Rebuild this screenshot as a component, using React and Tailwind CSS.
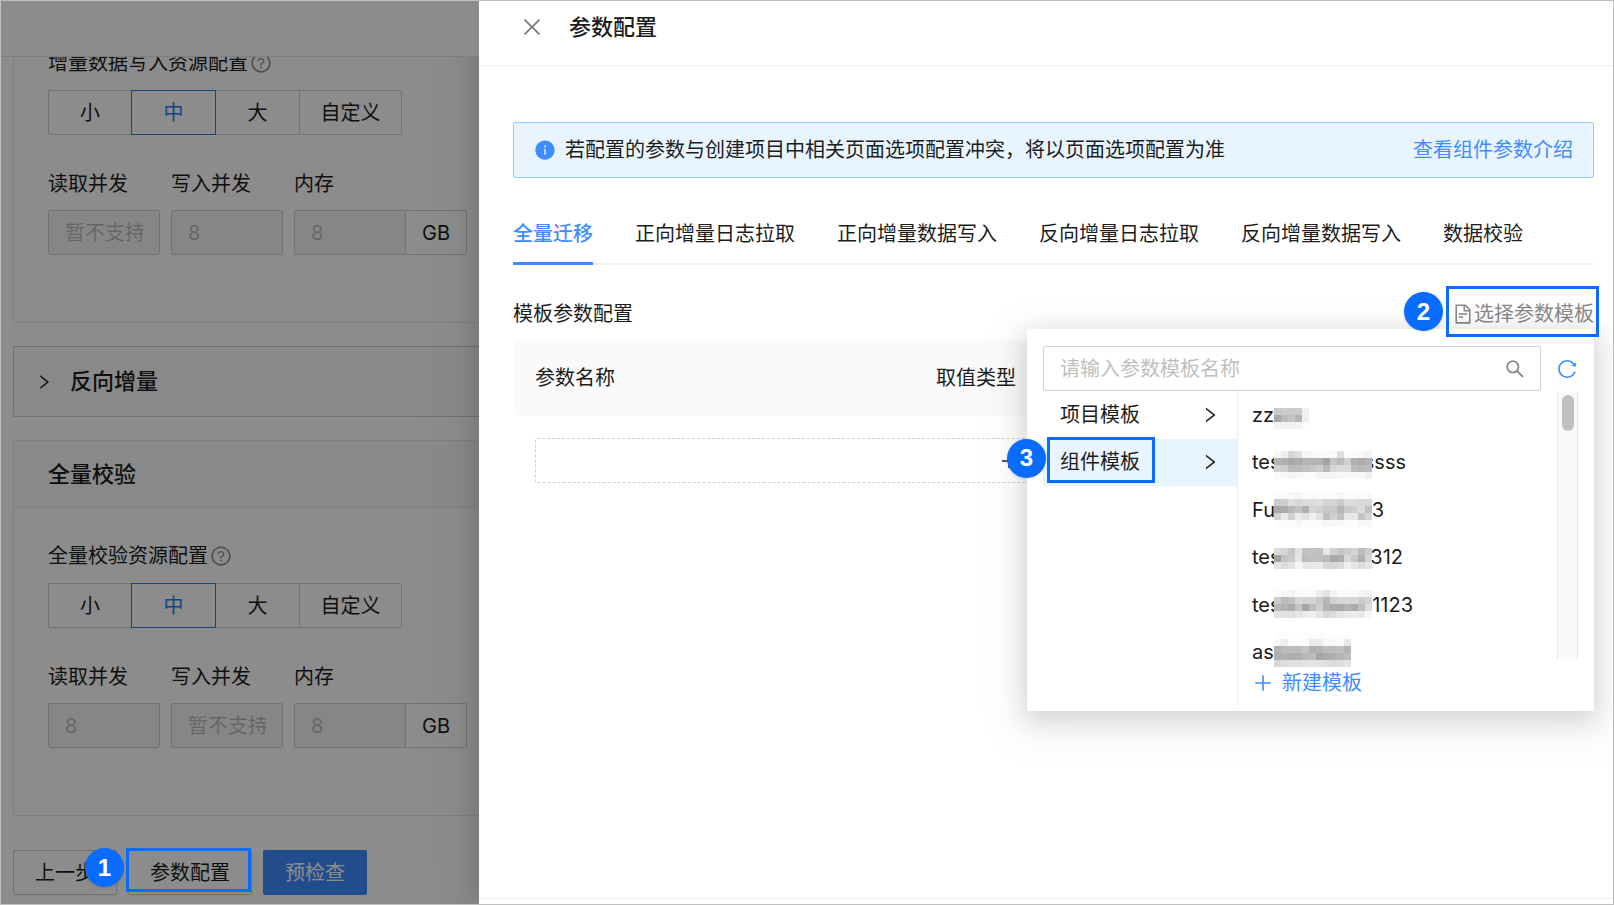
import React from "react";
import {
  AiOutlineClose,
  AiOutlineSearch,
  AiOutlineReload,
  AiOutlineQuestionCircle,
  AiOutlineFileText,
  AiOutlineRight,
  AiFillInfoCircle,
  AiOutlinePlus,
} from "react-icons/ai";

const sizes = [
  { label: "小", box: "w-[83px] rounded-l-xs border-l border-y" },
  { label: "中", box: "w-[85px] border", active: true },
  { label: "大", box: "w-[83px] border-y" },
  { label: "自定义", box: "w-[103px] rounded-r-xs border" },
];

const tabs = ["全量迁移", "正向增量日志拉取", "正向增量数据写入", "反向增量日志拉取", "反向增量数据写入", "数据校验"];

const templates = [
  {
    start: "zzz",
    top: "top-[17px]",
    cells: ["c8 cb cb cb f0", "a8 bb c4 b5 ee", "f3 f3 f3 f3 fc"],
  },
  {
    start: "tes",
    end: "ssss",
    endBox: "w-[34px]",
    top: "top-3",
    cells: [
      "f8 ee d6 e0 f6 f8 fa fa f8 dd fb fb f8 f2",
      "b5 b0 a8 ac b4 b4 b5 a4 c4 bc d0 b0 aa b2",
      "d0 cc bb bc c0 c6 cc b8 d6 dc dc bc b8 bc",
      "f8 f8 f4 f8 fa fc f4 f4 f4 f8 f8 f8 f8 f0",
    ],
  },
  {
    start: "Fu",
    end: "3",
    endBox: "w-3",
    top: "top-[6px]",
    cells: [
      "fc fc f8 f6 fc fa fc fc fa f8 fc fb fa fa",
      "cc cf e0 d8 dc dc e0 d4 d4 cc dc dc d8 d8",
      "aa aa b8 c2 b0 d4 d0 c8 c8 b8 ca d0 dc c0",
      "d2 ea d0 ea e2 f0 e2 c0 d2 c2 e8 e8 c4 d4",
      "fc fc fa f8 fc fc fc f6 f8 f8 fc fc f8 f8",
    ],
  },
  {
    start: "tes",
    end: "312",
    endBox: "w-[31px]",
    top: "top-[14px]",
    cells: [
      "dc d4 c6 e2 c2 c4 c0 e8 d2 c4 cc d4 bc cc",
      "a2 c4 c8 e6 bc c0 c0 bc a8 ac d8 c8 b0 d4",
      "e4 dc e2 f6 e8 e8 ea d8 d6 dc f0 e6 dc e4",
    ],
  },
  {
    start: "tes",
    end: "1123",
    endBox: "w-[41px]",
    top: "top-[9px]",
    cells: [
      "fa f6 f4 fa fc fb ee e4 f4 fb fb fa f6 f0",
      "cc bc c2 d6 d2 d4 ca b8 d0 d8 d8 d6 cc d2",
      "b8 b4 ac c4 a6 bc d0 b4 ac aa b4 aa c0 de",
      "e2 e2 e0 e6 ea f0 e4 d8 dc e4 ea ec e8 f6",
    ],
  },
  {
    start: "asc",
    top: "top-[3px]",
    cells: [
      "fd fd fe fe fe fc fd fe fe fe fc",
      "f6 ee fc fc fc ec ec f8 f8 f8 e8",
      "b2 bc bc bc c6 b0 b4 bc bc bf b4",
      "b0 b0 b0 b0 b8 bc a6 aa b0 b4 bc",
      "d8 de e0 e0 e4 e4 e2 de dc de e4",
    ],
  },
];

function Badge({ n, place }) {
  return (
    <span
      className={`absolute z-40 flex size-[39px] items-center justify-center rounded-full bg-[#0a6cff] font-['Liberation_Sans',sans-serif] text-2xl font-bold text-white shadow-sm ${place}`}
    >
      {n}
    </span>
  );
}

function Highlight({ place }) {
  return <span className={`pointer-events-none absolute z-30 border-3 border-[#0a6cff] ${place}`} />;
}

function Field({ id, label, value, unit }) {
  return (
    <div className="flex shrink-0 flex-col gap-3">
      <label htmlFor={id} className="leading-7">
        {label}
      </label>
      <div className="flex h-[45px]">
        <input
          id={id}
          disabled
          defaultValue={value}
          className={`w-[112px] border border-[#d0d0d0] bg-[#f5f5f5] px-4 text-black/25 ${unit ? "rounded-l-xs" : "rounded-xs"}`}
        />
        {unit && (
          <span className="flex w-[61px] items-center justify-center rounded-r-xs border border-l-0 border-[#d0d0d0]">
            {unit}
          </span>
        )}
      </div>
    </div>
  );
}

function ResourceForm({ name, title, read, write }) {
  return (
    <div className="flex flex-col pb-[67px] pl-[34px]">
      <div className="flex items-center gap-[2px] leading-7">
        {title}
        <AiOutlineQuestionCircle className="size-[22px] text-black/45" />
      </div>
      <div role="radiogroup" aria-label={title} className="mt-[13px] flex h-[45px]">
        {sizes.map((s) => (
          <label
            key={s.label}
            className={`relative flex items-center justify-center ${s.box} ${
              s.active ? "border-[#2b7cf0] text-[#2b7cf0]" : "border-[#d0d0d0]"
            }`}
          >
            <input type="radio" name={name} defaultChecked={s.active} className="sr-only" />
            {s.label}
          </label>
        ))}
      </div>
      <div className="mt-[35px] flex gap-[11px]">
        <Field id={`${name}-read`} label="读取并发" value={read} />
        <Field id={`${name}-write`} label="写入并发" value={write} />
        <Field id={`${name}-memory`} label="内存" value="8" unit="GB" />
      </div>
    </div>
  );
}

function Mosaic({ cells, top }) {
  const rows = cells.map((r) => r.split(" "));
  const w = rows[0].length * 7;
  const h = rows.length * 7;
  return (
    <svg className={`absolute left-9 ${top}`} width={w} height={h} shapeRendering="crispEdges" aria-hidden="true">
      {rows.map((row, y) =>
        row.map((c, x) => (
          <rect key={`${x}-${y}`} x={x * 7} y={y * 7} width="7" height="7" fill={`#${c}${c}${c}`} />
        ))
      )}
    </svg>
  );
}

function TemplatePopover() {
  return (
    <div className="absolute top-full right-0 z-20 w-[567px] rounded-xs bg-white pt-[17px] pr-4 pb-[5px] pl-4 text-[#1c1c1c] shadow-[0_9px_28px_8px_rgba(0,0,0,0.05),0_6px_24px_rgba(0,0,0,0.10),0_12px_48px_16px_rgba(0,0,0,0.04)]">
      <div className="flex items-center gap-[15px]">
        <div className="flex h-[45px] flex-1 items-center rounded-xs border border-[#d0d0d0] pr-[14px] pl-4">
          <input
            aria-label="请输入参数模板名称"
            placeholder="请输入参数模板名称"
            className="min-w-0 flex-1 outline-none placeholder:text-[#bfbfbf]"
          />
          <AiOutlineSearch className="size-[22px] text-black/50" />
        </div>
        <button type="button" aria-label="刷新" className="text-[#3f8cff]">
          <AiOutlineReload className="size-[22px]" />
        </button>
      </div>
      <div className="flex">
        <ul className="grid h-[95px] w-[194px] grid-rows-2">
          <li className="grid">
            <button type="button" className="flex items-center justify-between pr-[17px] pl-[17px]">
              项目模板
              <AiOutlineRight className="size-5" />
            </button>
          </li>
          <li className="relative grid">
            <button type="button" className="flex items-center justify-between bg-[#e8f5ff] pr-[17px] pl-[17px]">
              组件模板
              <AiOutlineRight className="size-5" />
            </button>
            <Highlight place="-top-[2px] left-1 h-[46px] w-[108px]" />
            <Badge n="3" place="top-0 -left-9" />
          </li>
        </ul>
        <div className="flex-1 border-l border-[#ececec]">
          <div className="flex h-[269px]">
            <ul className="grid h-[285px] flex-1 grid-rows-6">
              {templates.map((t, i) => (
                <li key={i} className="relative flex items-center pl-[14px] whitespace-nowrap">
                  <span className="w-[22px]">{t.start}</span>
                  {t.end && <span className={`ml-[98px] flex justify-end ${t.endBox}`}>{t.end}</span>}
                  <Mosaic cells={t.cells} top={t.top} />
                </li>
              ))}
            </ul>
            <div className="flex w-[21px] justify-center border-x border-[#e8e8e8] bg-[#fafafa] pt-1">
              <div className="h-9 w-3 rounded-full bg-[#c1c1c1]" />
            </div>
          </div>
          <button type="button" className="relative flex h-[46px] items-center gap-2 pl-[14px] text-[#3f8cff]">
            <AiOutlinePlus className="size-[22px]" />
            新建模板
          </button>
        </div>
      </div>
    </div>
  );
}

function ProjectPage() {
  return (
    <div className="relative w-[478px] shrink-0 overflow-hidden bg-white">
      <header className="relative z-5 h-14 border-b border-[#e6e6e6] bg-white" />
      <main className="pl-3">
        <section className="-mt-2 border-b border-l border-[#ebebeb]">
          <ResourceForm name="incr" title="增量数据写入资源配置" read="暂不支持" write="8" />
        </section>
        <section className="mt-[23px] rounded-l-xs border border-r-0 border-[#d0d0d0] bg-[#fafafa]">
          <button type="button" className="flex h-[69px] items-center gap-[17px] pl-[21px] text-[22px] font-medium">
            <AiOutlineRight className="size-[18px]" />
            反向增量
          </button>
        </section>
        <section className="mt-[23px] rounded-l-xs border border-r-0 border-[#ebebeb]">
          <h2 className="flex h-[67px] items-center border-b border-[#ebebeb] bg-[#fafafa] pl-[34px] text-[22px] font-medium">
            全量校验
          </h2>
          <div className="pt-[34px]">
            <ResourceForm name="check" title="全量校验资源配置" read="8" write="暂不支持" />
          </div>
        </section>
        <div className="mt-[34px] flex h-[45px] gap-[11px]">
          <button type="button" className="rounded-xs border border-[#d0d0d0] px-[21px] shadow-xs">
            上一步
          </button>
          <div className="relative flex">
            <button type="button" className="rounded-xs border border-[#d0d0d0] px-[21px] shadow-xs">
              参数配置
            </button>
            <Highlight place="-top-[2px] right-px bottom-[3px] -left-[2px]" />
            <Badge n="1" place="-top-[2px] -left-[43px]" />
          </div>
          <button type="button" className="rounded-xs bg-[#3f8cff] px-[22px] text-white">
            预检查
          </button>
        </div>
      </main>
      <div className="pointer-events-none absolute inset-0 z-10 bg-black/45" />
    </div>
  );
}

function ParameterDrawer() {
  return (
    <aside
      aria-label="参数配置"
      className="relative z-0 flex min-w-0 flex-1 flex-col bg-white shadow-[-12px_0_48px_16px_rgba(0,0,0,0.04),-6px_0_24px_rgba(0,0,0,0.12)]"
    >
      <header className="flex h-[65px] items-start border-b border-[#ececec] pt-[10px] pl-[41px]">
        <button type="button" aria-label="关闭" className="flex h-8 items-center text-black/50">
          <AiOutlineClose className="size-6" />
        </button>
        <h1 className="ml-[25px] text-[22px] leading-8 font-medium">参数配置</h1>
      </header>
      <div className="flex-1 pt-14 pr-[19px] pl-[34px]">
        <div className="flex h-14 items-center rounded-xs border border-[#91caff] bg-[#e8f5ff] px-5">
          <AiFillInfoCircle className="mr-[9px] size-[22px] text-[#3f8cff]" />
          <p className="flex-1">若配置的参数与创建项目中相关页面选项配置冲突，将以页面选项配置为准</p>
          <a href="#parameters" className="text-[#3f8cff]">
            查看组件参数介绍
          </a>
        </div>
        <div role="tablist" className="mt-6 flex h-[63px] gap-[42px] border-b-2 border-[#f0f0f0]">
          {tabs.map((t, i) => (
            <button
              key={t}
              type="button"
              role="tab"
              aria-selected={i === 0}
              className={`-mb-[2px] shrink-0 border-b-3 pt-[3px] ${
                i === 0 ? "border-[#3f8cff] font-medium text-[#3f8cff]" : "border-transparent"
              }`}
            >
              {t}
            </button>
          ))}
        </div>
        <div className="mt-[34px] flex h-[30px] items-center justify-between">
          <h2>模板参数配置</h2>
          <div className="relative">
            <button type="button" className="flex h-[30px] items-center text-[#8a8a8a]">
              <AiOutlineFileText className="size-[22px]" />
              选择参数模板
            </button>
            <Highlight place="-top-[13px] -right-[5px] -bottom-2 -left-[6px]" />
            <Badge n="2" place="-top-[7px] -left-12" />
            <TemplatePopover />
          </div>
        </div>
        <table className="mt-[11px] w-full table-fixed">
          <thead>
            <tr className="h-[76px] text-left">
              <th className="w-[401px] rounded-l-md bg-[#fafafa] pl-[22px] font-normal">参数名称</th>
              <th className="rounded-r-md bg-[#fafafa] pl-[22px] font-normal">取值类型</th>
            </tr>
          </thead>
          <tbody>
            <tr>
              <td colSpan={2} className="px-[22px] pt-[22px]">
                <button
                  type="button"
                  className="flex h-[45px] w-full items-center justify-center gap-[10px] rounded-xs border border-dashed border-[#d0d0d0]"
                >
                  <AiOutlinePlus className="size-5" />
                  添加参数
                </button>
              </td>
            </tr>
          </tbody>
        </table>
      </div>
      <footer className="h-[6px] border-t border-[#ececec]" />
    </aside>
  );
}

export default function App() {
  return (
    <div className="flex min-h-screen overflow-hidden border border-[#bfbfbf] bg-white font-['Inter','Noto_Sans_CJK_SC',sans-serif] text-xl text-[#1c1c1c]">
      <ProjectPage />
      <ParameterDrawer />
    </div>
  );
}
